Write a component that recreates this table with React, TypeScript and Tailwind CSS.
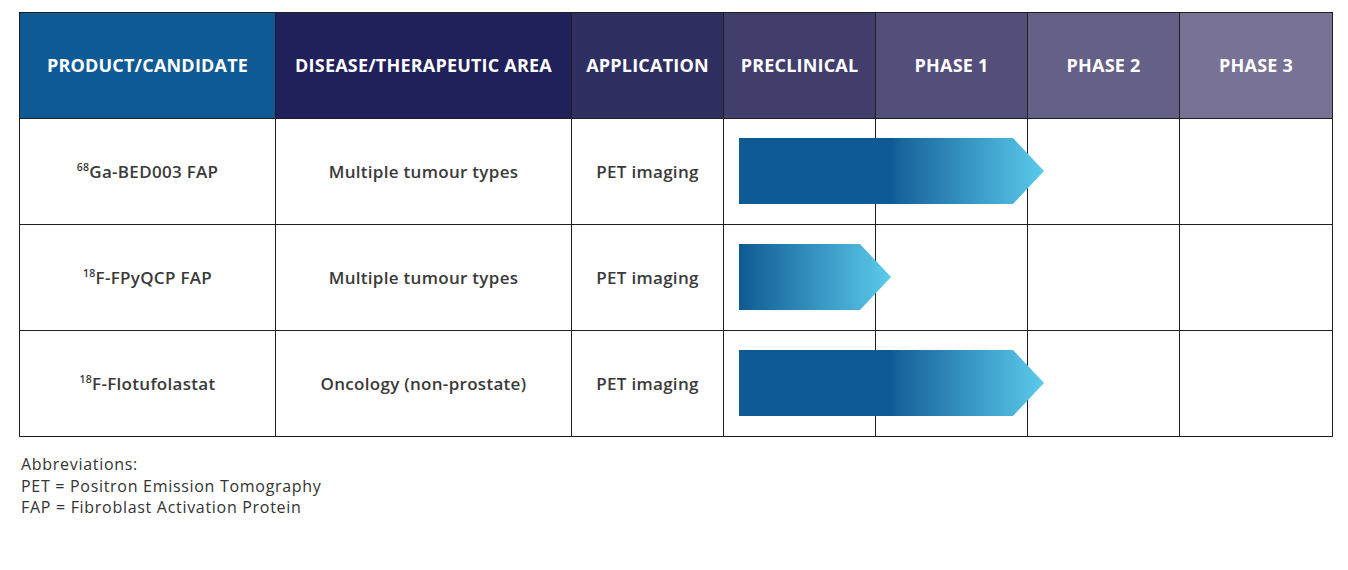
import React from "react";

const heads = [
  { label: "PRODUCT/CANDIDATE", bg: "bg-[#0f5a94]" },
  { label: "DISEASE/THERAPEUTIC AREA", bg: "bg-[#20205a]" },
  { label: "APPLICATION", bg: "bg-[#302f62]" },
  { label: "PRECLINICAL", bg: "bg-[#413e6c]" },
  { label: "PHASE 1", bg: "bg-[#534e7a]" },
  { label: "PHASE 2", bg: "bg-[#656087]" },
  { label: "PHASE 3", bg: "bg-[#787295]" },
];

const rows = [
  { iso: "68", name: "Ga-BED003 FAP", area: "Multiple tumour types", app: "PET imaging", len: "long" },
  { iso: "18", name: "F-FPyQCP FAP", area: "Multiple tumour types", app: "PET imaging", len: "short" },
  { iso: "18", name: "F-Flotufolastat", area: "Oncology (non-prostate)", app: "PET imaging", len: "long" },
];

function Arrow({ len, id }: { len: string; id: string }) {
  const w = len === "long" ? 305 : 152;
  const body = w - 31;
  return (
    <svg
      width={w}
      height={66}
      viewBox={`0 0 ${w} 66`}
      className="absolute left-[15px] top-[19px] z-10"
    >
      <defs>
        <linearGradient id={id} x1="0" y1="0" x2="1" y2="0">
          {len === "long" ? (
            <>
              <stop offset="0" stopColor="#0f5a94" />
              <stop offset="0.5" stopColor="#0f5a94" />
              <stop offset="0.52" stopColor="#17629b" />
              <stop offset="1" stopColor="#5bcbeb" />
            </>
          ) : (
            <>
              <stop offset="0" stopColor="#0f5a94" />
              <stop offset="1" stopColor="#5bcbeb" />
            </>
          )}
        </linearGradient>
      </defs>
      <polygon points={`0,0 ${body},0 ${w},33 ${body},66 0,66`} fill={`url(#${id})`} />
    </svg>
  );
}

export default function App() {
  return (
    <div className="w-[1348px] h-[570px] bg-white pt-[12px] pl-[19px] font-['Open_Sans',sans-serif]">
      <table className="table-fixed border-collapse w-[1313px]">
        <colgroup>
          <col className="w-[256px]" />
          <col className="w-[296px]" />
          <col className="w-[152px]" />
          <col className="w-[152px]" />
          <col className="w-[152px]" />
          <col className="w-[152px]" />
          <col className="w-[153px]" />
        </colgroup>
        <thead>
          <tr className="h-[106px]">
            {heads.map((h) => (
              <th
                key={h.label}
                className={`${h.bg} border border-[#1f1f1f] text-white text-[18px] font-bold tracking-[0.2px] text-center align-middle p-0`}
              >
                {h.label}
              </th>
            ))}
          </tr>
        </thead>
        <tbody>
          {rows.map((r, i) => (
            <tr key={i} className="h-[106px]">
              <td className="border border-[#1f1f1f] text-center text-[17px] tracking-[0.3px] font-semibold text-[#3a3a3a]">
                <sup className="text-[10.5px] relative -top-[7px]">{r.iso}</sup>
                {r.name}
              </td>
              <td className="border border-[#1f1f1f] text-center text-[17px] tracking-[0.3px] font-semibold text-[#3a3a3a]">
                {r.area}
              </td>
              <td className="border border-[#1f1f1f] text-center text-[17px] tracking-[0.3px] font-semibold text-[#3a3a3a]">
                {r.app}
              </td>
              <td className="border border-[#1f1f1f] relative p-0">
                <Arrow len={r.len} id={`g${i}`} />
              </td>
              <td className="border border-[#1f1f1f]" />
              <td className="border border-[#1f1f1f]" />
              <td className="border border-[#1f1f1f]" />
            </tr>
          ))}
        </tbody>
      </table>
      <div className="mt-[17px] ml-[2px] text-[16px] leading-[21.5px] tracking-[0.7px] text-[#333333] font-normal">
        <p>Abbreviations:</p>
        <p>PET = Positron Emission Tomography</p>
        <p>FAP = Fibroblast Activation Protein</p>
      </div>
    </div>
  );
}
